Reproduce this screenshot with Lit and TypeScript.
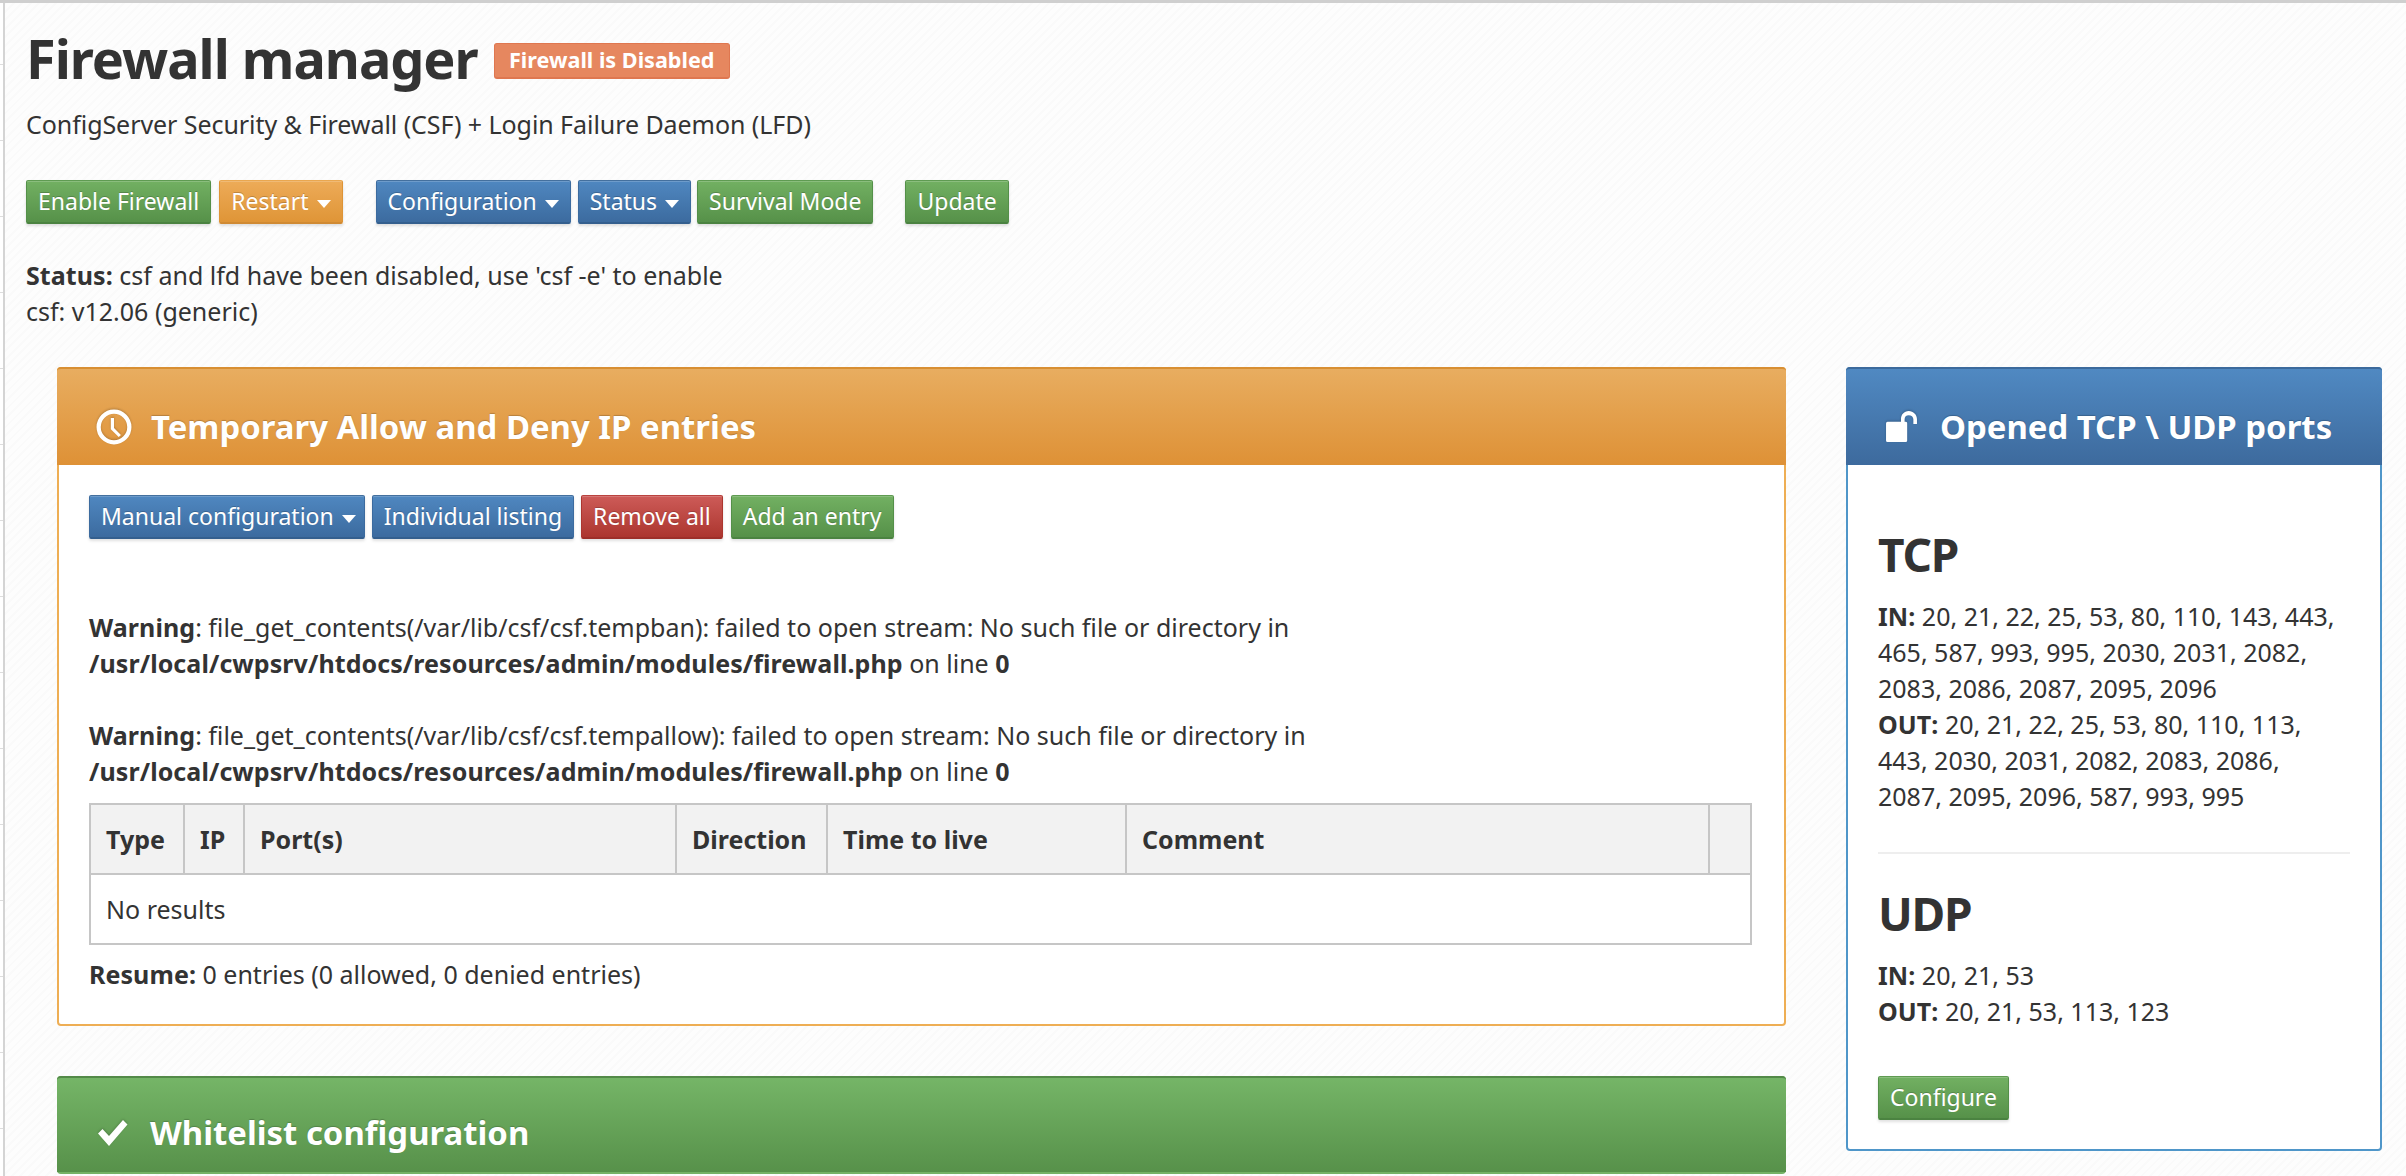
import { LitElement, html, css, svg } from "lit";
import { customElement } from "lit/decorators.js";

const caret = html`<span class="caret"></span>`;
const clock = svg`<circle cx="17" cy="17" r="14.500" fill="none" stroke="#fff" stroke-width="4"/><path d="M15.500 8.500v10l7 7" fill="none" stroke="#fff" stroke-width="3"/>`;
const lock = svg`<path d="M1 12a1.500 1.500 0 0 1 1.500-1.500H15.500V8C15.500 3.500 18.500 0 23 0s8 3.500 8 8v4.500h-3.500V8c0-2.500-2-4-4.500-4s-4 1.500-4 4v2.500h.500A1.500 1.500 0 0 1 21.500 12V28.500A1.500 1.500 0 0 1 20 30H2.500A1.500 1.500 0 0 1 1 28.500z" fill="#fff"/>`;
const check = svg`<path d="M1 15.500 5.500 11l6.500 7L26 2l4.500 4.500L12 28z" fill="#fff"/>`;

@customElement("app-root")
export class AppRoot extends LitElement {
  static styles = css`
    :host {
      display: block;
      height: 1176px;
      overflow: hidden;
      box-sizing: border-box;
      border-top: 3px solid #cfcfcf;
      background: repeating-linear-gradient(-45deg, #fafafa 0 2px, #fdfdfd 2px 6px);
      color: #333;
      font: 25px/36px "Noto Sans", "Open Sans", sans-serif;
      position: relative;
    }
    :host::before {
      content: "";
      position: absolute;
      left: 0; top: 0; bottom: 0; width: 5px;
      background:
        linear-gradient(#d4d4d4, #d4d4d4) 3px 0 / 2px 100% no-repeat,
        repeating-linear-gradient(#fff 0 61px, #ddd 61px 62px, #fff 62px 76px) 0 0 / 3px 100% no-repeat;
    }
    .top { padding: 26px 0 0 26px; }
    .title-row { display: flex; align-items: center; gap: 16px; height: 58px; }
    h1 { margin: 0; font-size: 54px; line-height: 58px; font-weight: 700; letter-spacing: -1px; }
    .badge {
      box-sizing: border-box; height: 36px; width: 236px; display: flex; align-items: center; justify-content: center;
      background: #e6875f; border: 1px solid #df7750; border-bottom-width: 2px; border-radius: 3px;
      color: #fff; font-size: 21.600px; font-weight: 700; margin-top: 5px;
    }
    .sub { margin-top: 19px; line-height: 36px; letter-spacing: -.06px; }
    .btns { display: flex; }
    .top .btns { margin-top: 38px; }
    .btn {
      box-sizing: border-box; height: 44px; padding: 0 11px; display: inline-flex; align-items: center; gap: 8px;
      color: #fff; font-size: 23px; line-height: 1; border-radius: 2px; white-space: nowrap;
      border: 1px solid; border-bottom-width: 2px;
      box-shadow: 0 2px 3px rgba(0,0,0,.12), inset 0 1px 0 rgba(255,255,255,.18);
      text-shadow: 0 -1px 0 rgba(0,0,0,.2);
    }
    .green { background: linear-gradient(#72b062, #569149); border-color: #5f9b52 #549049 #4b8341; }
    .orange { background: linear-gradient(#edab58, #df9537); border-color: #e9a750 #de9436 #d08a33; }
    .blue { background: linear-gradient(#4f87c0, #3c6b9f); border-color: #44709e #3c6b9f #345f8e; }
    .red { background: linear-gradient(#cd5b58, #ac362f); border-color: #b9433f #ac362f #9d2f29; }
    .caret { width: 0; height: 0; border: 7px solid transparent; border-top: 8px solid #fff; border-bottom: 0; margin-top: 4px; }
    .tight { padding-right: 8px; }
    .g6 { margin-right: 6px; }
    .g7 { margin-right: 7px; }
    .g8 { margin-right: 8px; }
    .g32 { margin-right: 32px; }
    .g33 { margin-right: 33px; }
    .status { margin-top: 33px; line-height: 36px; }
    b { font-weight: 700; letter-spacing: .08px; }
    .cols { display: flex; margin-top: 38px; padding-left: 57px; align-items: flex-start; }
    .left { width: 1729px; margin-right: 60px; flex: none; }
    .right { width: 536px; flex: none; }
    .panel { box-sizing: border-box; border: 2px solid; border-radius: 4px; background: #fff; }
    .p-orange { border-color: #eeae54; }
    .p-green { border-color: #74b265; margin-top: 50px; }
    .p-blue { border-color: #4f96c9; height: 784px; }
    .head {
      box-sizing: border-box; height: 98px; margin: -2px -2px 0; padding: 20px 0 0 39px; display: flex; align-items: center;
      gap: 19px; border-radius: 4px 4px 0 0; color: #fff; font-size: 32.900px; font-weight: 700;
      border-top: 2px solid; text-shadow: 0 -1px 1px rgba(0,0,0,.2);
    }
    .head svg { flex: none; filter: drop-shadow(0 -1px 1px rgba(0,0,0,.2)); }
    .h-orange { background: linear-gradient(#e8ad60, #de9136); border-color: #d88f33; }
    .h-green { background: linear-gradient(#75b567, #57914a); border-color: #538a48; height: 96px; padding-top: 16px; gap: 20px; }
    .h-blue { background: linear-gradient(#5089c2, #3d6a9d); border-color: #3c6a9c; gap: 22px; }
    .body { padding: 30px 30px 0; }
    .warn { margin: 0; line-height: 36px; }
    .warn1 { margin-top: 70px; }
    .warn2 { margin-top: 36px; }
    table { border-collapse: collapse; width: 1663px; margin-top: 14px; table-layout: fixed; }
    th, td { border: 2px solid #c6c6c6; text-align: left; padding: 0 15px; height: 70px; box-sizing: border-box; }
    th { background: #f2f2f2; font-weight: 700; }
    .resume { margin: 11px 0 32px; line-height: 36px; }
    .rb { padding: 0 30px; }
    h3 { margin: 0; font-size: 46px; line-height: 50px; font-weight: 700; letter-spacing: -1.200px; }
    .tcp { margin-top: 64px; }
    .lines { margin-top: 19px; line-height: 36px; }
    .lines div { white-space: nowrap; }
    hr { border: 0; border-top: 2px solid #eee; margin: 38px 0 0; }
    .udp { margin-top: 34px; }
    .rb .btn { margin-top: 47px; }
  `;

  render() {
    return html`
      <div class="top">
        <div class="title-row"><h1>Firewall manager</h1><span class="badge">Firewall is Disabled</span></div>
        <div class="sub">ConfigServer Security &amp; Firewall (CSF) + Login Failure Daemon (LFD)</div>
        <div class="btns">
          <span class="btn green g8">Enable Firewall</span>
          <span class="btn orange g33">Restart ${caret}</span>
          <span class="btn blue g7">Configuration ${caret}</span>
          <span class="btn blue g6">Status ${caret}</span>
          <span class="btn green g32">Survival Mode</span>
          <span class="btn green">Update</span>
        </div>
        <div class="status"><b>Status:</b> csf and lfd have been disabled, use 'csf -e' to enable<br />csf: v12.06 (generic)</div>
      </div>
      <div class="cols">
        <div class="left">
          <section class="panel p-orange">
            <div class="head h-orange"><svg width="36" height="36" viewBox="0 0 34 34">${clock}</svg><span>Temporary Allow and Deny IP entries</span></div>
            <div class="body">
              <div class="btns">
                <span class="btn blue tight g7">Manual configuration ${caret}</span>
                <span class="btn blue g7">Individual listing</span>
                <span class="btn red g8">Remove all</span>
                <span class="btn green">Add an entry</span>
              </div>
              <p class="warn warn1"><b>Warning</b>: file_get_contents(/var/lib/csf/csf.tempban): failed to open stream: No such file or directory in<br /><b>/usr/local/cwpsrv/htdocs/resources/admin/modules/firewall.php</b> on line <b>0</b></p>
              <p class="warn warn2"><b>Warning</b>: file_get_contents(/var/lib/csf/csf.tempallow): failed to open stream: No such file or directory in<br /><b>/usr/local/cwpsrv/htdocs/resources/admin/modules/firewall.php</b> on line <b>0</b></p>
              <table>
                <colgroup><col style="width:94px" /><col style="width:60px" /><col style="width:432px" /><col style="width:151px" /><col style="width:299px" /><col style="width:583px" /><col /></colgroup>
                <thead><tr><th>Type</th><th>IP</th><th>Port(s)</th><th>Direction</th><th>Time to live</th><th>Comment</th><th></th></tr></thead>
                <tbody><tr><td colspan="7">No results</td></tr></tbody>
              </table>
              <p class="resume"><b>Resume:</b> 0 entries (0 allowed, 0 denied entries)</p>
            </div>
          </section>
          <section class="panel p-green">
            <div class="head h-green"><svg width="34" height="30" viewBox="0 0 32 30">${check}</svg><span>Whitelist configuration</span></div>
          </section>
        </div>
        <div class="right">
          <section class="panel p-blue">
            <div class="head h-blue"><svg width="33" height="32" viewBox="0 0 32 31">${lock}</svg><span>Opened TCP \\ UDP ports</span></div>
            <div class="rb">
              <h3 class="tcp">TCP</h3>
              <div class="lines">
                <div><b>IN:</b> 20, 21, 22, 25, 53, 80, 110, 143, 443,</div>
                <div>465, 587, 993, 995, 2030, 2031, 2082,</div>
                <div>2083, 2086, 2087, 2095, 2096</div>
                <div><b>OUT:</b> 20, 21, 22, 25, 53, 80, 110, 113,</div>
                <div>443, 2030, 2031, 2082, 2083, 2086,</div>
                <div>2087, 2095, 2096, 587, 993, 995</div>
              </div>
              <hr />
              <h3 class="udp">UDP</h3>
              <div class="lines">
                <div><b>IN:</b> 20, 21, 53</div>
                <div><b>OUT:</b> 20, 21, 53, 113, 123</div>
              </div>
              <span class="btn green">Configure</span>
            </div>
          </section>
        </div>
      </div>
    `;
  }
}
